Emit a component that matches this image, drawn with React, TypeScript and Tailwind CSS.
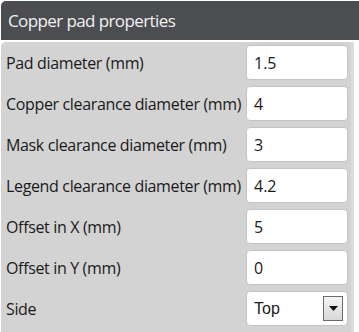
export default function App() {
  const rows = [
    { label: "Pad diameter (mm)", value: "1.5" },
    { label: "Copper clearance diameter (mm)", value: "4" },
    { label: "Mask clearance diameter (mm)", value: "3" },
    { label: "Legend clearance diameter (mm)", value: "4.2" },
    { label: "Offset in X (mm)", value: "5" },
    { label: "Offset in Y (mm)", value: "0" },
  ];

  return (
    <div className="w-[359px] h-[332px] bg-white pt-px pl-px overflow-hidden" style={{ fontFamily: '"Open Sans", sans-serif' }}>
      <div className="h-[39px] bg-[#4b4d51] rounded-tl-[5px] flex items-center pl-[7px] text-[#f2f2f2] text-[17px] tracking-[-0.6px]">
        Copper pad properties
      </div>
      <div className="mt-[2px] h-[301px] bg-[#d3d3d3] rounded-tl-[5px] border-r-[3px] border-[#dcdcdc] mr-[5px] pt-[3px] flex flex-col gap-[6px] text-[16px] text-[#1a1a1a]">
        {rows.map((r) => (
          <div key={r.label} className="flex items-center justify-between pl-[5px] pr-[3px]">
            <span className="tracking-[-0.35px]">{r.label}</span>
            <div className="w-[102px] h-[35px] bg-white rounded-[4px] border border-[#c4c4c4] flex items-center pl-[7px] text-[16px]">
              {r.value}
            </div>
          </div>
        ))}
        <div className="flex items-center justify-between pl-[5px] pr-[3px]">
          <span className="tracking-[-0.35px]">Side</span>
          <div className="w-[102px] h-[35px] bg-white rounded-[4px] border border-[#c4c4c4] flex items-center justify-between pl-[7px] pr-[4px] text-[16px]" style={{ fontFamily: '"Liberation Sans", sans-serif' }}>
            <span>Top</span>
            <div className="w-[20px] h-[25px] border border-[#6b6b6b] bg-gradient-to-b from-[#f4f4f4] to-[#d8d8d8] flex items-center justify-center">
              <svg width="9" height="5" viewBox="0 0 9 5"><path d="M0 0h9L4.5 5z" fill="#111" /></svg>
            </div>
          </div>
        </div>
      </div>
    </div>
  );
}
